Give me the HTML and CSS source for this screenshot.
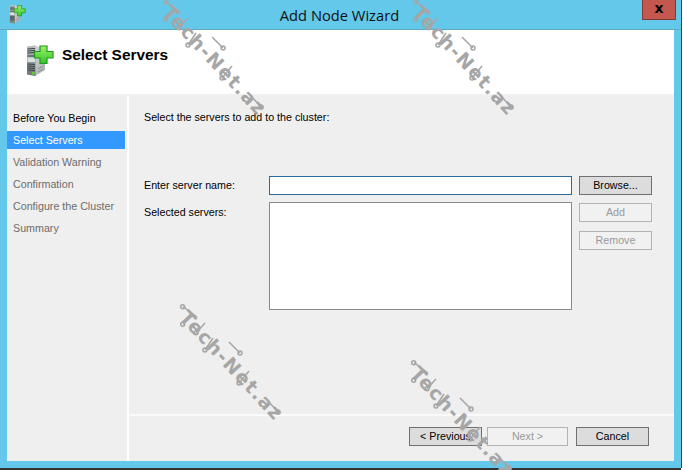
FILE: index.html
```html
<!DOCTYPE html>
<html lang="en">
<head>
<meta charset="utf-8">
<title>Add Node Wizard</title>
<link rel="stylesheet" href="styles.css">
</head>
<body>
<svg class="defs" width="0" height="0" aria-hidden="true">
  <defs>
    <linearGradient id="srvFront" x1="0" y1="0" x2="0" y2="1">
      <stop offset="0" stop-color="#b9c0c4"/><stop offset="1" stop-color="#6d7377"/>
    </linearGradient>
    <linearGradient id="srvSide" x1="0" y1="0" x2="1" y2="1">
      <stop offset="0" stop-color="#e2e4e4"/><stop offset="1" stop-color="#a9adad"/>
    </linearGradient>
    <linearGradient id="plusFill" x1="0" y1="0" x2="0" y2="1">
      <stop offset="0" stop-color="#9cf06a"/><stop offset="1" stop-color="#33c526"/>
    </linearGradient>
    <symbol id="wm" viewBox="0 0 110 115" overflow="visible">
      <g transform="translate(2 5)">
        <g class="wm-lines">
          <path d="M0 -3.300L14 7M0 14.300L8 4M13 22.700L22 13M22 40L30 28M57 43L46 32M56 73L66 61M95 102L84 90"/>
          <circle cx="-.3" cy="-3.300" r="2"/>
          <circle cx="-.3" cy="14.300" r="2"/>
          <circle cx="13" cy="22.700" r="2"/>
          <circle cx="22" cy="40" r="2"/>
          <circle cx="57" cy="43" r="2"/>
          <circle cx="56" cy="73" r="2"/>
          <circle cx="95" cy="102" r="2"/>
        </g>
        <text class="wm-text" transform="rotate(47)" x="3" y="9">Tech-Net.az</text>
      </g>
    </symbol>
    <symbol id="server" viewBox="0 0 28 32">
      <path d="M1 1.500L9 .5 19 4V25L9 31 1 29Z" fill="url(#srvSide)"/>
      <path d="M1 1.500L9.500 .5V31L1 29.500Z" fill="url(#srvFront)"/>
      <path d="M1.500 4L9 3.500M1.500 6L9 5.500M1.500 8L9 7.500M1.500 11L9 11M1.500 19L9 19.500M1.500 21L9 21.500M1.500 23L9 23.500M1.500 25L9 25.500" stroke="#3b4043" stroke-width="1" fill="none"/>
      <rect x="1.500" y="12.500" width="7.500" height="4.500" fill="#d9e0e0"/>
      <rect x="6" y="27" width="2.500" height="2.500" fill="#5fd32f"/>
      <path d="M12 27L17 24M12 24L17 21" stroke="#8c9092" fill="none"/>
      <path d="M13 1H20V6.500H26V13H20V18.500H13V13H7.500V6.500H13Z" transform="translate(1 0)" fill="url(#plusFill)" stroke="#1f9a1b" stroke-width="1.200"/>
    </symbol>
  </defs>
</svg>
<div class="window">
  <header class="titlebar">
    <svg class="app-icon" aria-hidden="true"><use href="#server"/></svg>
    <h1 class="title">Add Node Wizard</h1>
    <div class="close">x</div>
  </header>
  <div class="client">
    <div class="banner">
      <svg class="banner-icon" aria-hidden="true"><use href="#server"/></svg>
      <h2 class="banner-title">Select Servers</h2>
    </div>
    <div class="wizard">
      <nav class="steps">
        <div class="step done">Before You Begin</div>
        <div class="step current">Select Servers</div>
        <div class="step">Validation Warning</div>
        <div class="step">Confirmation</div>
        <div class="step">Configure the Cluster</div>
        <div class="step">Summary</div>
      </nav>
      <main class="page">
        <div class="page-body">
          <p class="intro">Select the servers to add to the cluster:</p>
          <div class="form">
            <label class="label" for="srv">Enter server name:</label>
            <input class="input" id="srv" type="text">
            <button class="btn browse">Browse...</button>
            <div class="label selected-label">Selected servers:</div>
            <div class="listbox"></div>
            <div class="side-btns">
              <button class="btn off">Add</button>
              <button class="btn off">Remove</button>
            </div>
          </div>
        </div>
        <footer class="footer">
          <button class="btn prev">&lt; Previous</button>
          <button class="btn off next">Next &gt;</button>
          <button class="btn cancel">Cancel</button>
        </footer>
      </main>
    </div>
  </div>
</div>
<svg class="wm wm1" aria-hidden="true"><use href="#wm"/></svg>
<svg class="wm wm2" aria-hidden="true"><use href="#wm"/></svg>
<svg class="wm wm3" aria-hidden="true"><use href="#wm"/></svg>
<svg class="wm wm4" aria-hidden="true"><use href="#wm"/></svg>
</body>
</html>
```
FILE: styles.css
```css
* { box-sizing: border-box; }
html, body { margin: 0; height: 100%; }
body {
  position: relative;
  width: 683px;
  height: 470px;
  overflow: hidden;
  background: #fff;
  font-family: "Liberation Sans", Arial, sans-serif;
  font-size: 10.700px;
  color: #000;
}
.defs { position: absolute; }
.window {
  width: 681px;
  height: 468px;
  background: #63c8ea;
  display: flex;
  flex-direction: column;
  box-shadow: 0 2px 0 #333, 1px 0 0 #444;
}
.titlebar {
  height: 30px;
  flex: none;
  display: flex;
  align-items: flex-start;
  position: relative;
  border-bottom: 1px solid #5fa9c4;
}
.app-icon { width: 17px; height: 19px; margin: 5px 0 0 9px; }
.title {
  position: absolute;
  left: 0;
  right: 0;
  top: 5px;
  margin: 0;
  text-align: center;
  font-family: "Open Sans", sans-serif;
  font-weight: 400;
  font-size: 14.700px;
  line-height: 20px;
  color: #111;
  padding-right: 2px;
}
.close {
  position: absolute;
  left: 642px;
  top: -1px;
  width: 34px;
  height: 21px;
  background: #c4574e;
  border: 1px solid #7f3a36;
  color: #000;
  font: 700 14px/16px "DejaVu Sans", sans-serif;
  text-align: center;
}
.client {
  flex: 1;
  margin: 0 7px 7px;
  display: flex;
  flex-direction: column;
  background: #fff;
  min-height: 0;
}
.banner {
  height: 66px;
  flex: none;
  display: flex;
  align-items: flex-start;
  border-bottom: 2px solid #f0f0f0;
}
.banner-icon { width: 28px; height: 32px; margin: 15px 0 0 19px; }
.banner-title {
  margin: 14px 0 0 8px;
  font-family: "Liberation Sans", sans-serif;
  font-size: 15.400px;
  line-height: 22px;
  font-weight: 700;
}
.wizard {
  flex: 1;
  display: flex;
  gap: 2px;
  min-height: 0;
  background: #fff;
}
.steps {
  width: 120px;
  flex: none;
  background: #efefef;
  padding-top: 11px;
  color: #6d6d6d;
}
.step { height: 22px; line-height: 22px; padding-left: 6px; }
.step.done { color: #000; }
.step.current {
  height: 18px;
  line-height: 18px;
  margin: 2px 2px 2px 0;
  background: #3399ff;
  color: #fff;
}
.page {
  flex: 1;
  display: flex;
  flex-direction: column;
  background: #efefef;
}
.page-body { flex: 1; padding: 13px 0 0 15px; }
.intro { margin: 0; line-height: 17px; }
.form {
  margin-top: 50px;
  display: grid;
  grid-template-columns: 125px 303px 73px;
  column-gap: 0;
  grid-template-rows: 26px auto;
}
.label { line-height: 18px; }
.selected-label { padding-top: 1px; }
.input {
  width: 303px;
  height: 19px;
  border: 1px solid #2a6b9c;
  background: #fff;
  padding: 0;
  margin: 0;
  outline: none;
}
.listbox {
  width: 303px;
  height: 108px;
  background: #fff;
  border: 1px solid #8a8a8a;
}
.btn {
  font: inherit;
  width: 73px;
  height: 19px;
  padding: 0;
  line-height: 15px;
  border: 1px solid #707070;
  background: #dcdcdc;
  color: #000;
}
.browse, .side-btns { margin-left: 7px; }
.btn.off {
  background: #f1f1f1;
  border-color: #b3b3b3;
  color: #9a9a9a;
}
.side-btns { display: flex; flex-direction: column; gap: 9px; padding-top: 1px; }
.footer {
  height: 47px;
  flex: none;
  border-top: 2px solid #fafafa;
  padding: 11px 0 0 280px;
  display: flex;
  align-items: flex-start;
}
.prev { width: 73px; }
.next { width: 81px; margin-left: 5px; }
.cancel { width: 73px; margin-left: 8px; }
.wm {
  position: absolute;
  width: 110px;
  height: 115px;
  overflow: visible;
  pointer-events: none;
}
.wm1 { left: 164px; top: 0; }
.wm2 { left: 414px; top: 0; }
.wm3 { left: 181px; top: 305px; }
.wm4 { left: 412px; top: 361px; }
.wm-text {
  font-family: "DejaVu Sans", sans-serif;
  font-size: 19px;
  font-weight: 700;
  letter-spacing: 1.500px;
  fill: #a6a6a6;
}
.wm-lines { fill: none; stroke: #a6a6a6; stroke-width: 1.500; }
```
